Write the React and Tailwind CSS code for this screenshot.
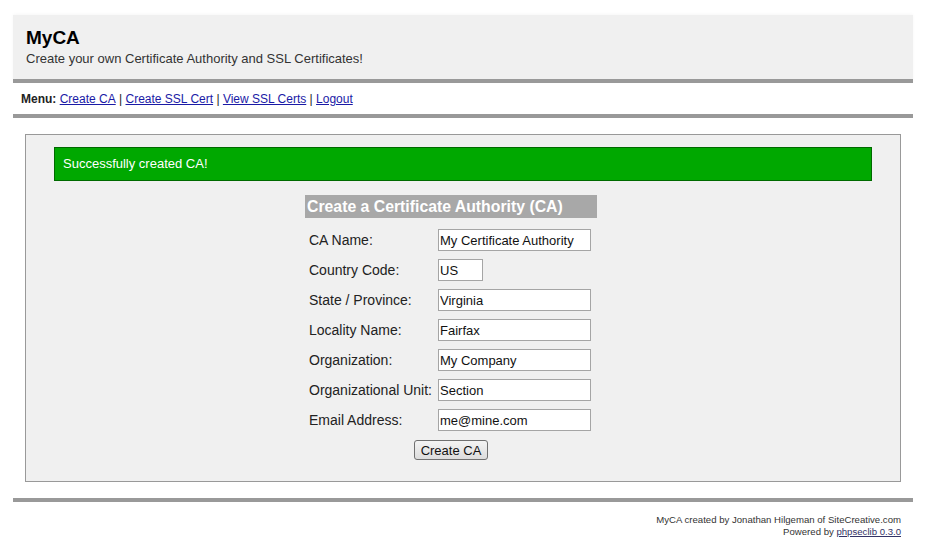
import React from "react";

const rows = [
  { label: "CA Name:", value: "My Certificate Authority", w: "w-[153px]" },
  { label: "Country Code:", value: "US", w: "w-[45px]" },
  { label: "State / Province:", value: "Virginia", w: "w-[153px]" },
  { label: "Locality Name:", value: "Fairfax", w: "w-[153px]" },
  { label: "Organization:", value: "My Company", w: "w-[153px]" },
  { label: "Organizational Unit:", value: "Section", w: "w-[153px]" },
  { label: "Email Address:", value: "me@mine.com", w: "w-[153px]" },
];

export default function App() {
  return (
    <div className="min-h-[552px] bg-white font-['Liberation_Sans',Arial,sans-serif] text-[#222]">
      <div className="ml-[13px] w-[900px] pt-[15px]">
        {/* Header */}
        <div className="h-[68px] border-b-4 border-[#999999] bg-[#f0f0f0] px-[13px] pt-[12px] shadow-[0_-1px_3px_rgba(0,0,0,0.03)]">
          <div className="text-[19px] font-bold leading-[22px] text-black">MyCA</div>
          <div className="mt-[2px] text-[13px] leading-[15px] text-[#333]">
            Create your own Certificate Authority and SSL Certificates!
          </div>
        </div>

        {/* Menu */}
        <div className="flex h-[35px] items-center border-b-4 border-[#999999] pl-[8px] text-[12px] text-[#222]">
          <span className="font-bold">Menu:</span>
          <span>&nbsp;</span>
          <a href="#" className="text-[#1a1aa6] underline">Create CA</a>
          <span>&nbsp;|&nbsp;</span>
          <a href="#" className="text-[#1a1aa6] underline">Create SSL Cert</a>
          <span>&nbsp;|&nbsp;</span>
          <a href="#" className="text-[#1a1aa6] underline">View SSL Certs</a>
          <span>&nbsp;|&nbsp;</span>
          <a href="#" className="text-[#1a1aa6] underline">Logout</a>
        </div>

        {/* Content box */}
        <div className="mx-[12px] mt-[16px] h-[348px] border border-[#999999] bg-[#f0f0f0] px-[28px] pt-[12px]">
          <div className="flex h-[34px] items-center border border-[#006a00] bg-[#00a800] pl-[8px] text-[13px] text-white">
            Successfully created CA!
          </div>

          <div className="ml-[251px] mt-[14px] w-[292px]">
            <div className="flex h-[23px] items-center bg-[#a8a8a8] pl-[2px] text-[15.8px] font-bold text-white">
              Create a Certificate Authority (CA)
            </div>
            <div className="mt-[11px] flex flex-col gap-[8px]">
              {rows.map((r) => (
                <div key={r.label} className="flex items-center pl-[4px]">
                  <div className="w-[129px] text-[14px] text-[#222]">{r.label}</div>
                  <input
                    readOnly
                    value={r.value}
                    className={`${r.w} h-[22px] border border-[#a5a5a5] bg-white px-[1px] text-[13px] text-[#111] outline-none`}
                  />
                </div>
              ))}
            </div>
            <div className="mt-[9px] flex justify-center">
              <button className="h-[20px] w-[74px] rounded-[3px] border border-[#707070] bg-gradient-to-b from-[#f4f4f4] to-[#dcdcdc] text-[13px] leading-none text-[#111]">
                Create CA
              </button>
            </div>
          </div>
        </div>

        {/* Footer */}
        <div className="mt-[16px] border-t-4 border-[#999999] pr-[12px] pt-[12px] text-right text-[9.6px] leading-[12px] text-[#333]">
          <div>MyCA created by Jonathan Hilgeman of SiteCreative.com</div>
          <div>
            Powered by{" "}
            <a href="#" className="text-[#333366] underline">phpseclib 0.3.0</a>
          </div>
        </div>
      </div>
    </div>
  );
}
